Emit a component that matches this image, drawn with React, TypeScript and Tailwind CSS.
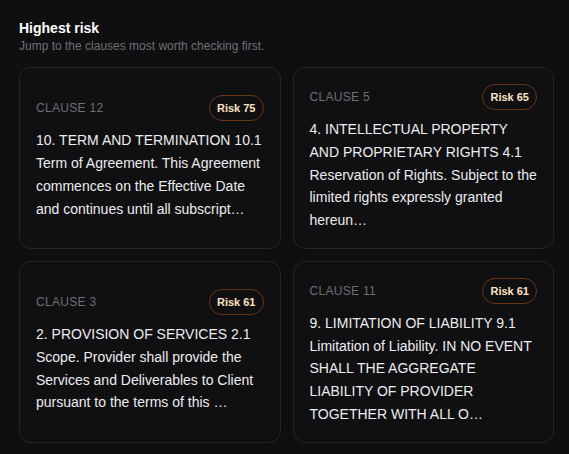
import React from "react";

type Item = { clause: string; risk: number; text: string };

const items: Item[] = [
  {
    clause: "CLAUSE 12",
    risk: 75,
    text: "10. TERM AND TERMINATION 10.1 Term of Agreement. This Agreement commences on the Effective Date and continues until all subscript…",
  },
  {
    clause: "CLAUSE 5",
    risk: 65,
    text: "4. INTELLECTUAL PROPERTY AND PROPRIETARY RIGHTS 4.1 Reservation of Rights. Subject to the limited rights expressly granted hereun…",
  },
  {
    clause: "CLAUSE 3",
    risk: 61,
    text: "2. PROVISION OF SERVICES 2.1 Scope. Provider shall provide the Services and Deliverables to Client pursuant to the terms of this …",
  },
  {
    clause: "CLAUSE 11",
    risk: 61,
    text: "9. LIMITATION OF LIABILITY 9.1 Limitation of Liability. IN NO EVENT SHALL THE AGGREGATE LIABILITY OF PROVIDER TOGETHER WITH ALL O…",
  },
];

export default function App() {
  return (
    <div
      className="min-h-screen bg-[#0f0f11] pl-[19px] pr-[15px] pt-[18px] pb-4"
      style={{ fontFamily: '"Liberation Sans", Arial, sans-serif' }}
    >
      <h2 className="text-sm leading-5 font-bold text-white">Highest risk</h2>
      <p className="text-xs leading-4 text-[#6e6e73]">
        Jump to the clauses most worth checking first.
      </p>
      <div className="mt-[13px] grid grid-cols-2 gap-3">
        {items.map((it) => (
          <div
            key={it.clause}
            className="flex flex-col justify-center rounded-xl border border-[#26262a] bg-[#101012] p-4"
          >
            <div className="flex items-center justify-between">
              <span className="text-xs tracking-wide text-[#6e6e73]">{it.clause}</span>
              <span className="rounded-full border border-[#6b3412] px-[7px] py-1 text-[11px] leading-4 font-bold text-[#fde3c4]">
                Risk {it.risk}
              </span>
            </div>
            <p className="mt-2 text-sm leading-relaxed text-[#ececee]">{it.text}</p>
          </div>
        ))}
      </div>
    </div>
  );
}
